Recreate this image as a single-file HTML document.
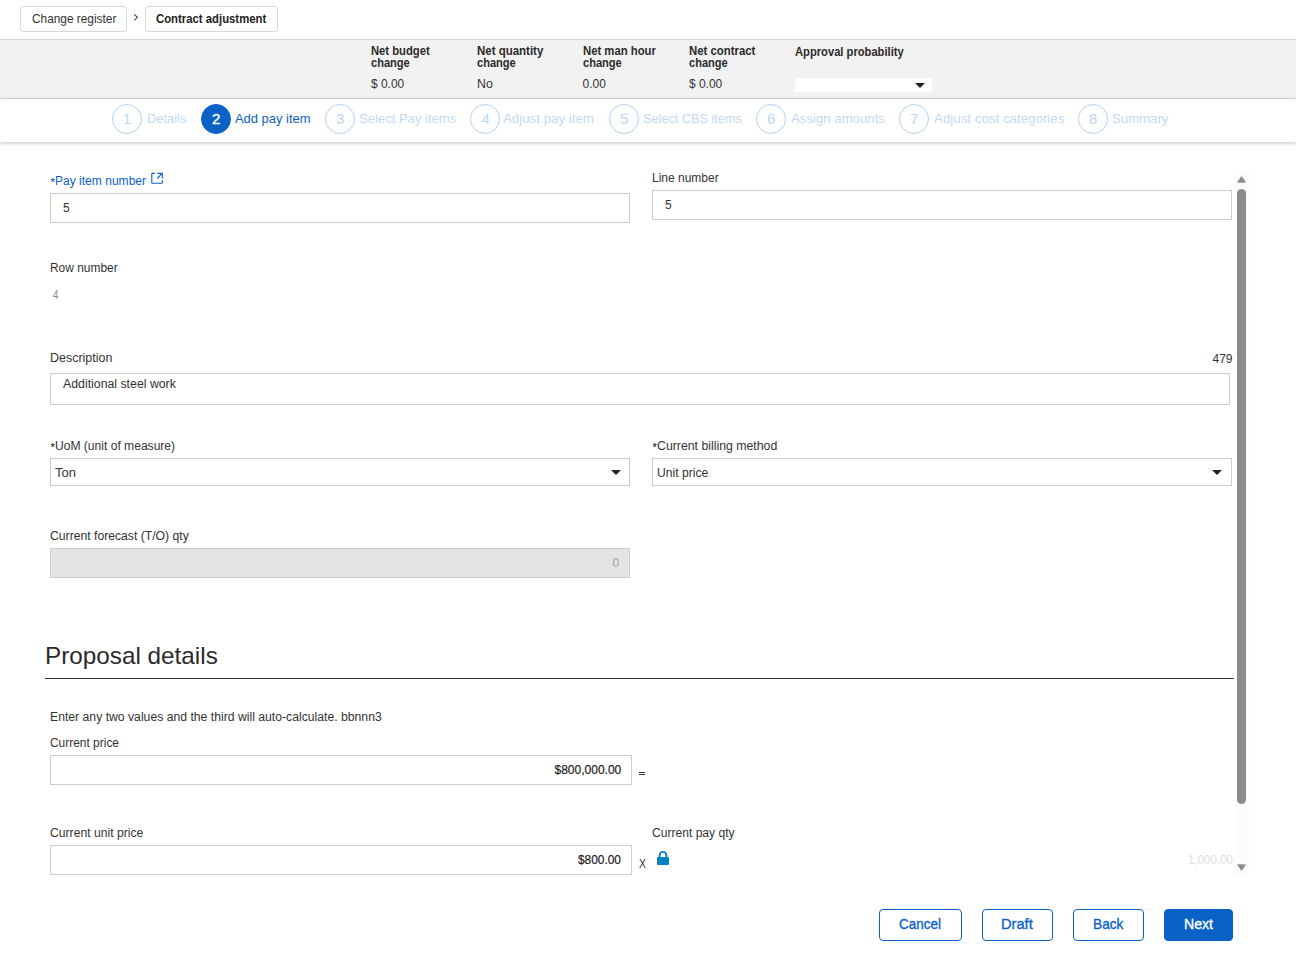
<!DOCTYPE html>
<html>
<head>
<meta charset="utf-8">
<title>Contract adjustment</title>
<style>
*{box-sizing:border-box;margin:0;padding:0}
html,body{width:1296px;height:975px;overflow:hidden;background:#fff}
body{position:relative;font-family:"Liberation Sans",sans-serif;font-size:12px;color:#333}
.a{position:absolute}
.t{position:absolute;white-space:pre;line-height:20px;display:block;transform-origin:0 0}
.bc{position:absolute;top:6px;height:26px;border:1px solid #d9d9d9;border-radius:3px;background:#fff}
#bar{position:absolute;left:0;top:39px;width:1296px;height:60px;background:#f2f2f2;border-top:1px solid #dcdcdc;border-bottom:1px solid #dcdcdc}
#steps{position:absolute;left:0;top:99px;width:1296px;height:43px;background:#fff;box-shadow:0 1px 4px rgba(0,0,0,.24)}
.ci{position:absolute;top:104px;width:30px;height:30px;border-radius:50%;border:1px solid #b4d1f1;color:#bcd6f2;font-size:14px;line-height:29px;text-align:center;background:#fff}
.ci.on{background:#0a62c6;border-color:#0a62c6;color:#fff}
.in{position:absolute;border:1px solid #ccc;background:#fff}
.tri{position:absolute;width:0;height:0;border-left:5px solid transparent;border-right:5px solid transparent;border-top:5px solid #222}
.btn{position:absolute;top:909px;height:32px;border:1px solid #0a62c6;border-radius:4px;background:#fff}
.btn.p{background:#0a62c6}
</style>
</head>
<body>
<!-- breadcrumb -->
<div class="bc" style="left:20px;width:107px"></div>
<svg class="a" style="left:133px;top:13px" width="6" height="9" viewBox="0 0 6 9"><path d="M1.2 1.3 L4.5 4.3 L1.2 7.3" fill="none" stroke="#444" stroke-width="1.05"/></svg>
<div class="bc" style="left:145px;width:133px"></div>

<!-- summary bar -->
<div id="bar"></div>
<div class="a" style="left:795px;top:78px;width:137px;height:14px;background:#fff"></div>
<div class="tri" style="left:915px;top:83px"></div>

<!-- stepper -->
<div id="steps"></div>
<div class="ci" style="left:112px"></div>
<div class="ci on" style="left:201px"></div>
<div class="ci" style="left:325px"></div>
<div class="ci" style="left:470px"></div>
<div class="ci" style="left:609px"></div>
<div class="ci" style="left:756px"></div>
<div class="ci" style="left:899px"></div>
<div class="ci" style="left:1078px"></div>

<!-- form boxes -->
<svg class="a" style="left:150px;top:171px" width="16" height="16" viewBox="0 0 16 16"><path d="M4.9 2.4H2.4Q1.8 2.4 1.8 3V11.7Q1.8 12.3 2.4 12.3H11.7Q12.3 12.3 12.3 11.7V8.9M7.3 2.4H12.3V7.4M12 2.7L7.2 7.5" fill="none" stroke="#0a62c6" stroke-width="1.1"/></svg>
<span class="t" style="left:50.4px;top:172px;font-size:11px;-webkit-text-stroke:0.2px #0a62c6;color:#0a62c6">*</span>
<span class="t" style="left:50.4px;top:437px;font-size:11px;-webkit-text-stroke:0.2px #333;color:#333">*</span>
<span class="t" style="left:652.4px;top:437px;font-size:11px;-webkit-text-stroke:0.2px #333;color:#333">*</span>
<div class="in" style="left:50px;top:193px;width:580px;height:30px"></div>
<div class="in" style="left:652px;top:190px;width:580px;height:30px"></div>
<div class="in" style="left:50px;top:373px;width:1180px;height:32px"></div>
<div class="in" style="left:50px;top:458px;width:580px;height:28px"></div>
<div class="tri" style="left:611px;top:470px"></div>
<div class="in" style="left:652px;top:458px;width:580px;height:28px"></div>
<div class="tri" style="left:1212px;top:470px"></div>
<div class="in" style="left:50px;top:548px;width:580px;height:30px;background:#e4e4e4"></div>
<div class="a" style="left:45px;top:678px;width:1189px;height:1px;background:#333"></div>
<div class="in" style="left:50px;top:755px;width:582px;height:30px"></div>
<div class="in" style="left:50px;top:845px;width:582px;height:30px"></div>
<svg class="a" style="left:656px;top:850px" width="14" height="16" viewBox="0 0 14 16"><rect x="1" y="6.9" width="12" height="8.1" rx="0.9" fill="#0280c3"/><path d="M3.6 7.5V5.3A3.4 3.4 0 0 1 10.4 5.3V7.5" fill="none" stroke="#0280c3" stroke-width="1.9"/></svg>

<div class="a" style="left:639px;top:772px;width:6px;height:1px;background:#3a3a3a"></div>
<div class="a" style="left:639px;top:774px;width:6px;height:1px;background:#3a3a3a"></div>

<!-- scrollbar -->
<div class="a" style="left:1234px;top:171px;width:15px;height:704px;background:#fcfcfc"></div>
<div class="a" style="left:1237px;top:189px;width:9px;height:615px;border-radius:4.5px;background:#8b8b8b"></div>
<svg class="a" style="left:1237px;top:176px" width="9" height="7" viewBox="0 0 9 7"><path d="M4.5 0.6 L8.4 6.2 H0.6Z" fill="#8b8b8b" stroke="#8b8b8b" stroke-width="0.8" stroke-linejoin="round"/></svg>
<svg class="a" style="left:1237px;top:864px" width="9" height="7" viewBox="0 0 9 7"><path d="M4.5 6.4 L8.4 0.8 H0.6Z" fill="#8b8b8b" stroke="#8b8b8b" stroke-width="0.8" stroke-linejoin="round"/></svg>

<!-- buttons -->
<div class="btn" style="left:879px;width:83px"></div>
<div class="btn" style="left:982px;width:71px"></div>
<div class="btn" style="left:1073px;width:71px"></div>
<div class="btn p" style="left:1164px;width:69px"></div>

<!-- text -->
<span class="t" style="left:31.50px;top:9px;font-size:13px;color:#333;transform:scaleX(0.9121);">Change register</span>
<span class="t" style="left:156.30px;top:9px;font-size:13px;color:#222;font-weight:bold;transform:scaleX(0.8720);">Contract adjustment</span>
<span class="t" style="left:370.90px;top:41px;font-size:12px;color:#2b2b2b;font-weight:bold;transform:scaleX(0.9356);">Net budget</span>
<span class="t" style="left:370.90px;top:53px;font-size:12px;color:#2b2b2b;font-weight:bold;transform:scaleX(0.9222);">change</span>
<span class="t" style="left:476.90px;top:41px;font-size:12px;color:#2b2b2b;font-weight:bold;transform:scaleX(0.9559);">Net quantity</span>
<span class="t" style="left:476.90px;top:53px;font-size:12px;color:#2b2b2b;font-weight:bold;transform:scaleX(0.9222);">change</span>
<span class="t" style="left:582.50px;top:41px;font-size:12px;color:#2b2b2b;font-weight:bold;transform:scaleX(0.9421);">Net man hour</span>
<span class="t" style="left:582.70px;top:53px;font-size:12px;color:#2b2b2b;font-weight:bold;transform:scaleX(0.9222);">change</span>
<span class="t" style="left:688.60px;top:41px;font-size:12px;color:#2b2b2b;font-weight:bold;transform:scaleX(0.9478);">Net contract</span>
<span class="t" style="left:688.80px;top:53px;font-size:12px;color:#2b2b2b;font-weight:bold;transform:scaleX(0.9222);">change</span>
<span class="t" style="left:794.70px;top:42px;font-size:12px;color:#2b2b2b;font-weight:bold;transform:scaleX(0.9316);">Approval probability</span>
<span class="t" style="left:370.90px;top:74px;font-size:12px;color:#333;transform:scaleX(0.9941);">$ 0.00</span>
<span class="t" style="left:476.90px;top:74px;font-size:12px;color:#333;transform:scaleX(1.0288);">No</span>
<span class="t" style="left:582.50px;top:74px;font-size:12px;color:#333;">0.00</span>
<span class="t" style="left:688.80px;top:74px;font-size:12px;color:#333;transform:scaleX(0.9941);">$ 0.00</span>
<span class="t" style="left:123.10px;top:109px;font-size:15px;color:#bcd6f2;">1</span>
<span class="t" style="left:212.10px;top:109px;font-size:15px;color:#fff;-webkit-text-stroke:0.35px #fff;">2</span>
<span class="t" style="left:336.10px;top:109px;font-size:15px;color:#bcd6f2;">3</span>
<span class="t" style="left:481.60px;top:109px;font-size:15px;color:#bcd6f2;">4</span>
<span class="t" style="left:620.10px;top:109px;font-size:15px;color:#bcd6f2;">5</span>
<span class="t" style="left:767.10px;top:109px;font-size:15px;color:#bcd6f2;">6</span>
<span class="t" style="left:910.10px;top:109px;font-size:15px;color:#bcd6f2;">7</span>
<span class="t" style="left:1089.10px;top:109px;font-size:15px;color:#bcd6f2;">8</span>
<span class="t" style="left:146.75px;top:109px;font-size:13px;color:#c3daf3;transform:scaleX(0.9895);">Details</span>
<span class="t" style="left:234.75px;top:109px;font-size:13px;color:#0a62c6;transform:scaleX(0.9947);">Add pay item</span>
<span class="t" style="left:358.80px;top:109px;font-size:13px;color:#c3daf3;transform:scaleX(1.0042);">Select Pay items</span>
<span class="t" style="left:503.25px;top:109px;font-size:13px;color:#c3daf3;transform:scaleX(1.0228);">Adjust pay item</span>
<span class="t" style="left:643.00px;top:109px;font-size:13px;color:#c3daf3;transform:scaleX(0.9780);">Select CBS items</span>
<span class="t" style="left:791.00px;top:109px;font-size:13px;color:#c3daf3;transform:scaleX(1.0152);">Assign amounts</span>
<span class="t" style="left:934.00px;top:109px;font-size:13px;color:#c3daf3;transform:scaleX(1.0252);">Adjust cost categories</span>
<span class="t" style="left:1111.90px;top:109px;font-size:13px;color:#c3daf3;transform:scaleX(1.0148);">Summary</span>
<span class="t" style="left:55.00px;top:171px;font-size:12.5px;color:#0a62c6;transform:scaleX(0.9635);">Pay item number</span>
<span class="t" style="left:63.00px;top:198px;font-size:12px;color:#333;">5</span>
<span class="t" style="left:652.40px;top:168px;font-size:12.5px;color:#333;transform:scaleX(0.9589);">Line number</span>
<span class="t" style="left:665.00px;top:195px;font-size:12px;color:#333;">5</span>
<span class="t" style="left:50.30px;top:258px;font-size:12.5px;color:#333;transform:scaleX(0.9543);">Row number</span>
<span class="t" style="left:52.60px;top:285px;font-size:12px;color:#8c8c8c;transform:scaleX(0.8100);">4</span>
<span class="t" style="left:50.30px;top:348px;font-size:12.5px;color:#333;transform:scaleX(0.9968);">Description</span>
<span class="t" style="left:1212.50px;top:349px;font-size:12px;color:#333;">479</span>
<span class="t" style="left:62.80px;top:374px;font-size:12px;color:#333;transform:scaleX(1.0255);">Additional steel work</span>
<span class="t" style="left:55.00px;top:436px;font-size:12.5px;color:#333;transform:scaleX(0.9659);">UoM (unit of measure)</span>
<span class="t" style="left:55.00px;top:463px;font-size:12px;color:#333;transform:scaleX(1.0844);">Ton</span>
<span class="t" style="left:657.00px;top:436px;font-size:12.5px;color:#333;transform:scaleX(0.9834);">Current billing method</span>
<span class="t" style="left:656.50px;top:463px;font-size:12px;color:#333;transform:scaleX(1.0123);">Unit price</span>
<span class="t" style="left:50.40px;top:526px;font-size:12.5px;color:#333;transform:scaleX(0.9745);">Current forecast (T/O) qty</span>
<span class="t" style="left:612.60px;top:553px;font-size:12px;color:#a0a0a0;">0</span>
<span class="t" style="left:45.30px;top:646px;font-size:24px;color:#2b2b2b;transform:scaleX(1.0119);">Proposal details</span>
<span class="t" style="left:50.30px;top:707px;font-size:12.5px;color:#333;transform:scaleX(0.9763);">Enter any two values and the third will auto-calculate. bbnnn3</span>
<span class="t" style="left:50.30px;top:733px;font-size:12.5px;color:#333;transform:scaleX(0.9549);">Current price</span>
<span class="t" style="left:554.50px;top:760px;font-size:12px;color:#1a1a1a;-webkit-text-stroke:0.18px #1a1a1a;">$800,000.00</span>
<span class="t" style="left:50.30px;top:823px;font-size:12.5px;color:#333;transform:scaleX(0.9724);">Current unit price</span>
<span class="t" style="left:577.50px;top:850px;font-size:12px;color:#1a1a1a;-webkit-text-stroke:0.18px #1a1a1a;transform:scaleX(0.9907);">$800.00</span>
<span class="t" style="left:639.00px;top:854px;font-size:13px;color:#333;transform:scaleX(0.8010);">X</span>
<span class="t" style="left:651.60px;top:823px;font-size:12.5px;color:#333;transform:scaleX(0.9667);">Current pay qty</span>
<span class="t" style="left:1188.30px;top:850px;font-size:12px;color:#dedede;transform:scaleX(0.9645);">1,000.00</span>
<span class="t" style="left:898.60px;top:914px;font-size:15px;color:#0a62c6;-webkit-text-stroke:0.35px #0a62c6;transform:scaleX(0.8978);">Cancel</span>
<span class="t" style="left:1001.30px;top:914px;font-size:15px;color:#0a62c6;-webkit-text-stroke:0.35px #0a62c6;transform:scaleX(0.9754);">Draft</span>
<span class="t" style="left:1092.90px;top:914px;font-size:15px;color:#0a62c6;-webkit-text-stroke:0.35px #0a62c6;transform:scaleX(0.9127);">Back</span>
<span class="t" style="left:1183.70px;top:914px;font-size:15px;color:#fff;-webkit-text-stroke:0.35px #fff;transform:scaleX(0.9400);">Next</span>
</body>
</html>
